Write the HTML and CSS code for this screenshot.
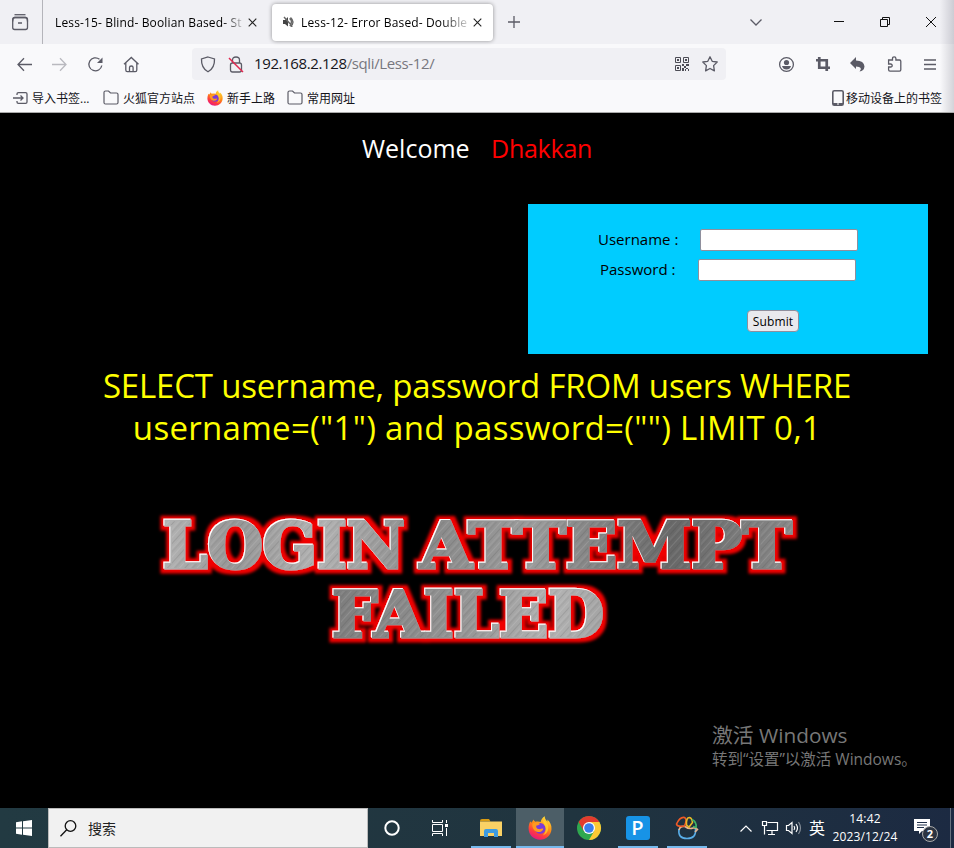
FILE: index.html
```html
<!DOCTYPE html>
<html lang="zh-CN">
<head>
<meta charset="utf-8">
<title>Less-12- Error Based- Double</title>
<link rel="stylesheet" href="styles.css">
</head>
<body>
<svg class="defs" width="0" height="0" aria-hidden="true">
  <defs>
    <linearGradient id="fxBody" x1=".8" y1="0" x2=".3" y2="1"><stop offset="0" stop-color="#ffe63c"/><stop offset=".45" stop-color="#ff8a16"/><stop offset=".75" stop-color="#ff3b3f"/><stop offset="1" stop-color="#e31587"/></linearGradient>
    <symbol id="firefox" viewBox="0 0 24 24">
      <path fill="url(#fxBody)" d="M2.2 5.5c.6.3 1 .8 1.3 1.3L5.6 3.5c.2 1 .8 1.8 1.800 2.200 2-.5 3.800-.4 5.300.3C13 3.600 14.500 1.500 16.800.3c-.2 2.600 1.200 3.700 2.700 5.400 0-.8-.1-1.500-.4-2.200 3 2.200 4.700 5.600 4.400 9.700C23 19.300 18.200 23.700 12 23.700 5.500 23.700.6 18.800.6 12.500c0-2.700.6-5 1.600-7z"/>
      <circle cx="12.300" cy="12.400" r="5.300" fill="#7a3bd8"/>
      <path fill="#ff9a20" d="M4.500 7.500c3-1.500 5.500-.9 7.500.4-1.100 1-2.900 1.500-3.900 1.800 0 2 .8 3 2.600 3.400 1.700.4 3-.9 4.700-.4-.9 2.600-3.700 4.100-6.600 3.100C5.500 14.600 3.700 11 4.500 7.500z"/>
      <path fill="#ffd52c" d="M15.500 4c3.600 2.400 5.500 5.500 4.600 9.500-.8 3.400-3 5-5.300 5.900 2.600-2.600 3.600-5.500 2.600-8.400-.7-2.200-2.600-3.800-1.900-7z" opacity=".75"/>
    </symbol>
    <symbol id="folder" viewBox="0 0 16 16"><path d="M1 12.500v-10q0-1.500 1.500-1.500h3l2 2h6q1.500 0 1.500 1.500v8q0 1.500-1.500 1.500h-11Q1 14 1 12.500z" fill="none" stroke="#5b5b66" stroke-width="1.200"/></symbol>
  </defs>
</svg>

<header class="browser">
  <div class="tabs">
    <div class="view"><svg width="18" height="18" viewBox="0 0 18 18" class="ln"><path d="M3.500 1.700h11"/><rect x="1.700" y="4.500" width="14.800" height="12" rx="2"/><path d="M1.700 8.500Q1.700 4.500 4 4.500h10q2.500 0 2.500 4M7 10h4"/></svg></div>
    <div class="tab">
      <span class="title t15">Less-15- Blind- Boolian Based- St</span>
      <svg class="x" width="9" height="9" viewBox="0 0 9 9"><path d="M.7.7l7.600 7.600M8.300.7.7 8.300"/></svg>
    </div>
    <div class="tab active">
      <svg class="mute" width="11" height="10" viewBox="0 0 11 10"><path fill="#444" d="M0 3h2l3-3v9.500L2 7H0z"/><path d="M6.500 1.500q4 3 0 7M7.500.5Q12.500 5 7.500 9.500M1 0l8.500 9.500" fill="none" stroke="#666" stroke-width="1.400"/></svg>
      <span class="title t12">Less-12- Error Based- Double</span>
      <svg class="x" width="9" height="9" viewBox="0 0 9 9"><path d="M.7.7l7.600 7.600M8.300.7.7 8.300"/></svg>
    </div>
    <svg class="plus ln" width="12" height="12" viewBox="0 0 12 12"><path d="M6 0v12M0 6h12"/></svg>
    <div class="winbtns">
      <svg class="ln" width="12" height="7" viewBox="0 0 12 7"><path d="M.5.5 6 6 11.500.5"/></svg>
      <svg class="bk min" width="10" height="10" viewBox="0 0 10 10"><path d="M0 4.500h10"/></svg>
      <svg class="bk" width="10" height="10" viewBox="0 0 10 10"><path d="M.5 2.500h7v7h-7zM2.500 2.500v-2h7v7h-2"/></svg>
      <svg class="bk" width="10" height="10" viewBox="0 0 10 10"><path d="M0 0l10 10M10 0 0 10"/></svg>
    </div>
  </div>

  <div class="nav">
    <div class="navleft">
      <svg class="ln" width="15" height="14" viewBox="0 0 15 14"><path d="M7 1.200 1 7.500l6 6.300M1 7.500h14"/></svg>
      <svg class="ln off" width="15" height="14" viewBox="0 0 15 14"><path d="M8 1.200 14 7.500l-6 6.300M14 7.500H0"/></svg>
      <svg class="ln" width="16" height="16" viewBox="0 0 16 16"><path d="M12.500 3.300A6.500 6.500 0 1 0 14.800 9.500"/><path d="M15.500 1.500V7H10z" fill="#5b5b66" stroke="none"/></svg>
      <svg class="ln" width="16" height="16" viewBox="0 0 16 16"><path d="M1 8.300 8.300 1.500l7.200 6.800M2.800 7v7q0 1.700 1.500 1.700h8q1.500 0 1.500-1.700V7M6.500 15.500v-4q0-1.500 1.800-1.500t1.800 1.500v4"/></svg>
    </div>
    <div class="urlbar">
      <svg class="ln" width="16" height="17" viewBox="0 0 16 17"><path d="M8 1 14.500 3q.4 9-6.500 12.800Q1.100 12 1.500 3z"/></svg>
      <svg class="ln lock" width="16" height="17" viewBox="0 0 16 17"><path d="M4.500 7V4q0-3 3.500-3t3.500 3v3M2.500 9q0-2 2-2h7q2 0 2 2v5q0 2-2 2h-7q-2 0-2-2z"/><path d="M1 2l14 14" stroke="#e22850" stroke-width="1.500"/></svg>
      <span class="url">192.168.2.128<i>/sqli/Less-12/</i></span>
      <svg class="qr" width="14" height="14" viewBox="0 0 14 14"><path fill="none" stroke="#4c4c55" d="M.5.5h5v5h-5zM8.500.5h5v5h-5zM.5 8.500h5v5h-5z"/><path fill="#4c4c55" d="M2 2h2v2H2zM10 2h2v2h-2zM2 10h2v2H2zM7 7h2v2H7zM9 9h2v2H9zM11 7h3v2h-3zM7 11h2v3H7zM11 11h2v1h-2zM10 12h1v2h-1zM13 12h1v2h-1z"/></svg>
      <svg class="ln" width="16" height="16" viewBox="0 0 16 16"><path stroke-linejoin="round" d="M8 .8l2.200 4.500 5 .7-3.600 3.600.8 5.300L8 12.500l-4.400 2.400.8-5.300L.8 6l5-.7z"/></svg>
    </div>
    <div class="tools">
      <svg class="ln" width="16" height="16" viewBox="0 0 16 16"><circle cx="8.500" cy="8.500" r="6.900"/><circle cx="8.500" cy="6.500" r="2.600" fill="#5b5b66" stroke="none"/><path d="M4 10h9q-1 3.500-4.500 3.500T4 10z" fill="#5b5b66" stroke="none"/></svg>
      <svg width="14" height="14" viewBox="0 0 15 15"><path d="M3.500 0v11.500H15M0 3.500h11.500V15" fill="none" stroke="#5b5b66" stroke-width="2.900"/></svg>
      <svg width="15" height="15" viewBox="0 0 15 15"><path fill="#5b5b66" d="M5 0v3.500q8 0 8.500 6-.5 4.500-5 5 4-4.500-3.500-5V12L-1 6z"/></svg>
      <svg class="ln" width="15" height="16" viewBox="0 0 15 16"><path d="M4.500 4V2.500q0-1.700 1.700-1.700t1.700 1.700V4h3.600q1.300 0 1.300 1.300v8.500q0 1.400-1.300 1.400H2q-1.400 0-1.400-1.400V11h2q1.600 0 1.600-1.500T2.600 8h-2V4z"/></svg>
      <svg class="ln" width="12" height="11" viewBox="0 0 12 11"><path d="M0 1h12M0 5.500h12M0 10h12"/></svg>
    </div>
  </div>

  <div class="marks">
    <svg class="ln" width="15" height="12" viewBox="0 0 15 12"><path d="M4 3V2q0-1.400 1.400-1.400h7.200Q14 .6 14 2v8q0 1.400-1.400 1.400H5.400Q4 11.400 4 10V9M0 6h10M7.500 3.500 10 6 7.500 8.500"/></svg>
    <span class="m1">导入书签...</span>
    <svg width="16" height="16"><use href="#folder"/></svg><span class="m2">火狐官方站点</span>
    <svg width="16" height="16"><use href="#firefox"/></svg><span class="m3">新手上路</span>
    <svg width="16" height="16"><use href="#folder"/></svg><span>常用网址</span>
    <svg class="phone" width="12" height="16" viewBox="0 0 12 16"><rect x=".8" y=".8" width="10.400" height="14.400" rx="1.500" fill="none" stroke="#5b5b66" stroke-width="1.600"/><path d="M1 13h10v2H1z" fill="#5b5b66"/><path d="M5 14h2" stroke="#fff"/></svg>
    <span>移动设备上的书签</span>
  </div>
</header>

<main>
  <div class="welcome"><span class="w">Welcome</span><span class="d">Dhakkan</span></div>
  <form class="login">
    <div class="row"><label>Username :</label><input type="text" aria-label="Username"></div>
    <div class="row pw"><label>Password :</label><input type="password" aria-label="Password"></div>
    <button type="button"><span>Submit</span></button>
  </form>
  <div class="query"><span class="q1">SELECT username, password FROM users WHERE</span><span class="q2">username=("1") and password=("") LIMIT 0,1</span></div>
  <svg class="banner" width="660" height="150" viewBox="150 505 660 150">
    <defs>
      <linearGradient id="metal" gradientUnits="userSpaceOnUse" x1="160" y1="520" x2="800" y2="560"><stop offset="0" stop-color="#b5b5b5"/><stop offset=".12" stop-color="#969696"/><stop offset=".25" stop-color="#b2b2b2"/><stop offset=".42" stop-color="#898989"/><stop offset=".58" stop-color="#9b9b9b"/><stop offset=".8" stop-color="#686868"/><stop offset="1" stop-color="#8b8b8b"/></linearGradient>
      <linearGradient id="metal2" gradientUnits="userSpaceOnUse" x1="330" y1="590" x2="605" y2="640"><stop offset="0" stop-color="#7c7c7c"/><stop offset=".5" stop-color="#959595"/><stop offset=".8" stop-color="#b2b2b2"/><stop offset="1" stop-color="#a2a2a2"/></linearGradient>
      <pattern id="brush" width="13" height="13" patternUnits="userSpaceOnUse" patternTransform="rotate(42)"><path d="M1 0v13M6.500 0v13" stroke="#fff" stroke-opacity=".12"/><path d="M3 0v13M10.500 0v13" stroke="#333" stroke-opacity=".14"/></pattern>
      <filter id="glow" x="-10%" y="-20%" width="120%" height="140%"><feMorphology in="SourceAlpha" operator="dilate" radius="3.500" result="d"/><feGaussianBlur in="d" stdDeviation="1.700" result="b"/><feFlood flood-color="#f00000"/><feComposite in2="b" operator="in" result="g"/><feOffset in="SourceAlpha" dx="-.7" dy="-.7" result="o"/><feFlood flood-color="#fff"/><feComposite in2="o" operator="in" result="h"/><feMerge><feMergeNode in="g"/><feMergeNode in="h"/><feMergeNode in="SourceGraphic"/></feMerge></filter>
    </defs>
    <g class="metal" filter="url(#glow)">
      <g fill="url(#metal)" stroke="url(#metal)"><text x="163" y="568" textLength="242" lengthAdjust="spacingAndGlyphs">LOGIN</text><text x="420" y="568" textLength="372" lengthAdjust="spacingAndGlyphs">ATTEMPT</text></g>
      <text fill="url(#metal2)" stroke="url(#metal2)" x="332" y="637" textLength="272" lengthAdjust="spacingAndGlyphs">FAILED</text>
    </g>
    <g class="metal" fill="url(#brush)" aria-hidden="true"><text x="163" y="568" textLength="242" lengthAdjust="spacingAndGlyphs">LOGIN</text><text x="420" y="568" textLength="372" lengthAdjust="spacingAndGlyphs">ATTEMPT</text><text x="332" y="637" textLength="272" lengthAdjust="spacingAndGlyphs">FAILED</text></g>
  </svg>
  <div class="activate"><span class="a1">激活 Windows</span><span class="a2">转到“设置”以激活 Windows。</span></div>
</main>

<footer class="taskbar">
  <div class="start"><svg width="16" height="16" viewBox="0 0 16 16"><path fill="#fff" d="M0 2.200 6 1.300v6.200H0zM7 1.200 16 0v7.500H7zM0 8.500h6v6.200l-6-.9zM7 8.500h9V16l-9-1.300z"/></svg></div>
  <div class="search"><svg width="17" height="17" viewBox="0 0 17 17"><circle cx="10.500" cy="6" r="5.300"/><path d="M6.700 9.800.5 16.300"/></svg><span>搜索</span></div>
  <div class="app"><svg width="16" height="16" viewBox="0 0 16 16"><circle cx="8" cy="8" r="6.700" fill="none" stroke="#fff" stroke-width="2"/></svg></div>
  <div class="app tasks"><svg width="16" height="16" viewBox="0 0 16 16"><path d="M.5 0v2.500h10V0M.5 16v-2.500h10V16M.5 4.500h10v7H.5zM14.500 0v3M14.500 8v8" fill="none" stroke="#fff"/><path d="M13 4h3v3h-3z" fill="#fff"/></svg></div>
  <div class="app run files"><svg width="22" height="19" viewBox="0 0 22 19"><path d="M0 2q0-2 2-2h7l1.500 2.500H0z" fill="#d99b12"/><path d="M0 2.500h22V17H0z" fill="#fad165"/><path d="M4 18v-6q0-2 2-2h10q2 0 2 2v6h-4v-4H8v4z" fill="#3e9be0"/></svg></div>
  <div class="app run current"><svg width="24" height="24"><use href="#firefox"/></svg></div>
  <div class="app"><svg width="24" height="24" viewBox="0 0 24 24"><circle cx="12" cy="12" r="12" fill="#2fa84f"/><path d="M1.600 6A12 12 0 0 1 22.400 6H12L6.800 15z" fill="#e33b2e"/><path d="M22.400 6A12 12 0 0 1 12 24l5.200-9L12 6z" fill="#fcc934"/><circle cx="12" cy="12" r="6" fill="#fff"/><circle cx="12" cy="12" r="4.800" fill="#3b7ded"/></svg></div>
  <div class="app run p"><b>P</b></div>
  <div class="app run"><svg width="24" height="24" viewBox="0 0 24 24" fill="none" stroke-width="1.600"><path d="M4 13Q2.500 22.500 12 22.500T20.500 13" stroke="#59aee8"/><path d="M4 14q1-4.500 6-3.500 4 3 8 1.500 3-.5 4.500 1.500L20 16" stroke="#e9b48c"/><path d="M9.500 10Q2 11 1.500 8 5 .5 9.500 1.500 12.500 3 9.500 10z" stroke="#f05a26"/><path d="M11.500 9Q11 1.500 14.500 1.500 17 2 17.500 6.500L14 11z" stroke="#e9b927"/><path d="M17 3.500q5 2.500 4 8l-3-1" stroke="#3fb568"/></svg></div>
  <div class="tray">
    <svg class="up" width="12" height="7" viewBox="0 0 12 7"><path d="M.5 6.500 6 1l5.500 5.500"/></svg>
    <svg class="net" width="16" height="14" viewBox="0 0 16 14"><path d="M5.500 1.500h10v8h-11M10 9.500v3.500M6 13.500h7M.5.500h4v4h-4zM2.500 4.500v9"/></svg>
    <svg class="vol" width="16" height="14" viewBox="0 0 16 14"><path d="M.5 4.500h2l3.500-3v11l-3.500-3h-2zM8 5q1.500 2 0 4M10 3q3 4 0 8"/><path d="M12.500 1q4 6 0 12" opacity=".45"/></svg>
    <span class="ime">英</span>
    <div class="clock"><span>14:42</span><span class="date">2023/12/24</span></div>
    <div class="notice"><svg width="16" height="16" viewBox="0 0 16 16"><path fill="#fff" d="M0 0h16v12H8l-3 3v-3H0z"/><path d="M3 3.500h10M3 6h10M3 8.500h7" stroke="#20304a"/></svg><em>2</em></div>
    <div class="peek"></div>
  </div>
</footer>
</body>
</html>
```
FILE: styles.css
```css
* { box-sizing: border-box; }
body { margin: 0; width: 954px; height: 848px; overflow: hidden; background: #000; font-family: "Open Sans", "Noto Sans CJK SC", sans-serif; color: #15141a; display: flex; flex-direction: column; }
svg { display: block; flex: none; overflow: visible; }
span { white-space: nowrap; }
.defs { position: absolute; }
.ln { fill: none; stroke: #5b5b66; stroke-width: 1.300; }
.off { opacity: .4; }
.bk { fill: none; stroke: #111; stroke-width: 1; }

.browser { position: relative; height: 113px; background: #f9f9fb; border-bottom: 1px solid #aaa; }
.browser::after { content: ""; position: absolute; right: 0; top: 0; width: 14px; height: 112px; background: linear-gradient(90deg, transparent, rgba(60,60,80,.2)); }
.tabs { height: 44px; background: #f0f0f4; display: flex; align-items: center; }
.view { width: 43px; height: 44px; padding: 13px 0 0 11px; border-right: 1px solid #b4b4ba; }
.tab { display: flex; align-items: center; width: 229px; padding-left: 12px; height: 37px; font-size: 12px; }
.tab.active { width: 221px; background: #fff; border-radius: 4px; box-shadow: 0 0 4px rgba(0,0,0,.4); padding-left: 11px; }
.title { overflow: hidden; width: 189px; letter-spacing: .14px; color: #000; -webkit-mask-image: linear-gradient(90deg, #000 168px, transparent 192px); mask-image: linear-gradient(90deg, #000 168px, transparent 192px); }
.t12 { width: 168px; margin-left: 7px; -webkit-mask-image: linear-gradient(90deg, #000 140px, transparent 172px); mask-image: linear-gradient(90deg, #000 140px, transparent 172px); }
.x { margin-left: 4px; fill: none; stroke: #222; stroke-width: 1.100; }
.plus { margin-left: 15px; }
.winbtns { margin-left: auto; display: flex; align-items: center; padding-right: 18px; gap: 36px; }
.winbtns .min { margin-left: 36px; }

.nav { height: 40px; display: flex; align-items: center; }
.navleft { width: 192px; padding-left: 17px; display: flex; align-items: center; gap: 20px; }
.urlbar { width: 534px; height: 32px; background: #f0f0f4; border-radius: 4px; padding: 0 8px; display: flex; align-items: center; }
.lock { margin-left: 12px; }
.url { margin-left: 10px; margin-top: -2px; font-size: 15px; letter-spacing: -.38px; }
.url i { font-style: normal; color: #77777e; }
.qr { margin-left: auto; margin-right: 13px; }
.tools { display: flex; align-items: center; justify-content: space-between; width: 158px; margin-left: 52px; }

.marks { height: 28px; display: flex; align-items: center; padding: 0 12px 0 13px; font-size: 12px; }
.marks svg + span { margin-left: 4px; }
.m1 { width: 58px; margin-right: 13px; }
.m2 { margin-right: 12px; }
.m3 { margin-right: 12px; }
.marks .phone { margin-left: auto; }
.marks .phone + span { margin-left: 2px; }

main { position: relative; height: 695px; background: #000; display: flex; flex-direction: column; }
.welcome { height: 91px; padding-top: 17px; display: flex; padding-left: 362px; font-size: 25px; line-height: 36px; }
.w { color: #fff; width: 129px; }
.d { color: #f00; letter-spacing: -.25px; }
.login { width: 400px; height: 150px; margin-left: 528px; background: #0cf; color: #000; padding-top: 25px; font-size: 15px; }
.row { display: flex; align-items: center; height: 22px; padding-left: 70px; margin-bottom: 8px; }
.row label { width: 102px; white-space: nowrap; padding-bottom: 2px; }
.row.pw { padding-left: 72px; }
.pw label { width: 98px; }
.row input { width: 158px; height: 22px; border: 1px solid #8f8f9d; border-radius: 2px; background: #fff; padding: 0; }
.login button { display: flex; align-items: center; justify-content: center; width: 52px; height: 22px; margin: 29px 0 0 219px; padding: 0; border: 1px solid #8f8f9d; border-radius: 4px; background: #e9e9ed; font: 12px "Open Sans", sans-serif; letter-spacing: .1px; color: #000; }
.query { display: flex; flex-direction: column; align-items: center; padding-top: 11px; height: 151px; color: #ff0; font-size: 33px; line-height: 42px; }
.q1 { letter-spacing: -.17px; }
.q2 { letter-spacing: .3px; }
.banner { margin-left: 150px; }
.metal { font-family: "DejaVu Serif", serif; font-weight: bold; font-size: 63px; }
.metal > g, .metal > text { stroke-width: 3px; }
.metal[fill] > text { stroke-width: 0; }
.activate { position: absolute; left: 712px; top: 608px; display: flex; flex-direction: column; color: #777; }
.a1 { font-size: 20.800px; line-height: 28px; }
.a2 { font-size: 15.500px; line-height: 20px; }

.taskbar { height: 40px; display: flex; background: linear-gradient(90deg, #223a42 0%, #20343f 60%, #1c2a42 100%); color: #fff; }
.start { width: 48px; padding: 12px 0 0 16px; }
.search { width: 320px; border: 1px solid #bbb; background: #f1f1f1; display: flex; align-items: center; padding-left: 11px; color: #222; font-size: 14px; }
.search svg { fill: none; stroke: #111; stroke-width: 1.300; }
.search span { margin-left: 11px; }
.app { width: 49px; height: 40px; display: flex; align-items: center; justify-content: center; }
.app:nth-child(3) { width: 48px; }
.tasks { padding-right: 2px; }
.run { background: linear-gradient(#76b9ed, #76b9ed) center bottom / 40px 2px no-repeat; }
.files { width: 51px; }
.current { width: 48px; background-color: #4c5e67; background-size: 48px 2px; }
.p b { width: 24px; height: 24px; border-radius: 3px; background: #1793e6; font-size: 20px; line-height: 24px; text-align: center; font-weight: 600; }
.tray { margin-left: auto; display: flex; align-items: center; width: 214px; }
.tray > svg { fill: none; stroke: #fff; stroke-width: 1.200; }
.net { margin-left: 10px; }
.vol { margin-left: 8px; }
.ime { margin-left: 7px; margin-top: -2px; font-size: 16px; }
.clock { width: 68px; margin-left: 6px; display: flex; flex-direction: column; align-items: center; font-size: 12px; line-height: 18px; letter-spacing: .15px; }
.notice { position: relative; margin-left: 15px; padding-bottom: 2px; }
.notice em { position: absolute; left: 8px; top: 7px; width: 16px; height: 16px; border: 1px solid #aaa; border-radius: 50%; background: #2b3442; font: bold 11px/14px "Open Sans", sans-serif; text-align: center; }
.peek { margin-left: 20px; width: 1px; height: 40px; background: #66717f; }
```
